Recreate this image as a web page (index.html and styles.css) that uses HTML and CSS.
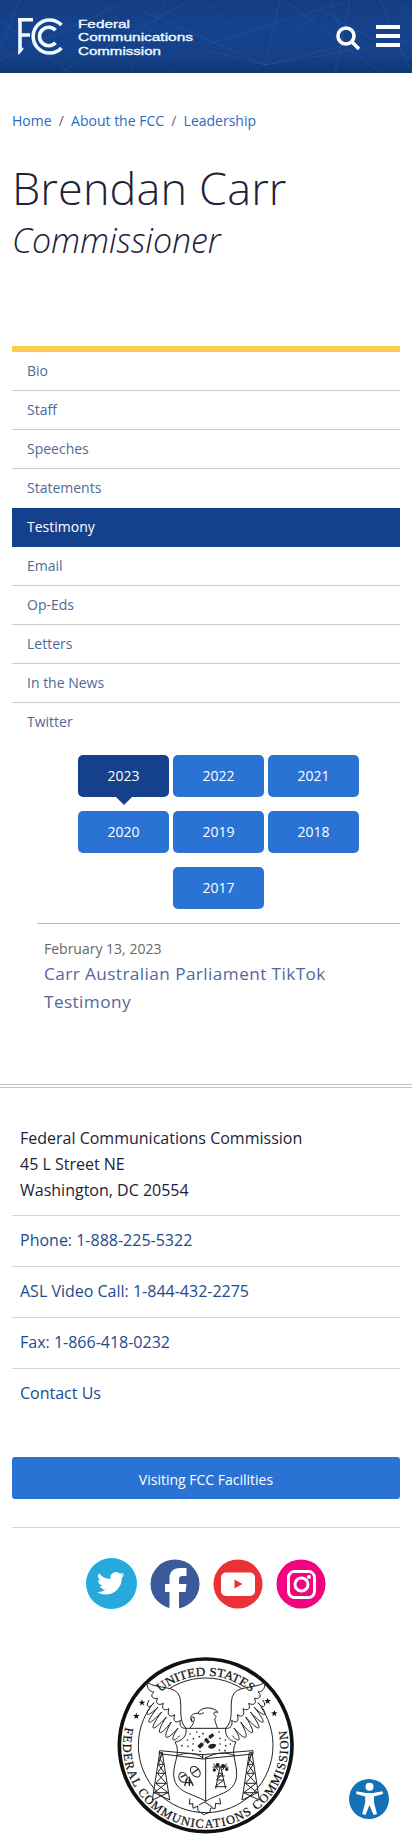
FILE: index.html
```html
<!DOCTYPE html>
<html lang="en">
<head>
<meta charset="utf-8">
<meta name="viewport" content="width=device-width, initial-scale=1">
<title>Brendan Carr | Federal Communications Commission</title>
<link rel="stylesheet" href="styles.css">
</head>
<body>
<header class="site-header">
  <svg class="header-web" viewBox="0 0 412 73" preserveAspectRatio="none" aria-hidden="true">
    <path d="M0 60 130 0M60 73 190 0M100 0 170 73M140 10 265 65 206 0M206 45 350 0M265 65 280 0M265 65 320 10 412 60M265 65 206 50M265 65 345 45 330 0M285 0 380 73M335 73 350 0M265 65 412 40M0 20 70 73M395 0 412 20M20 0 0 50M380 0 412 73M130 73 165 0"/>
  </svg>
  <a class="brand" href="#">
    <svg class="mark" viewBox="0 0 46 38" aria-label="FCC">
      <g class="mark-lines">
        <path d="M0 1.7H15M2 1V34M2 17H12"/>
        <path class="thin" d="M0 36 5 30"/>
        <path d="M43.5 7A16.5 16.5 0 1 0 43.5 30"/>
        <path d="M37.5 12.3A9.2 9.2 0 1 0 37.5 24.7"/>
      </g>
    </svg>
    <svg class="wordmark" viewBox="0 0 118 40">
      <text x="0" y="9.7" textLength="52" lengthAdjust="spacingAndGlyphs">Federal</text>
      <text x="0" y="23.2" textLength="115" lengthAdjust="spacingAndGlyphs">Communications</text>
      <text x="0" y="36.6" textLength="83" lengthAdjust="spacingAndGlyphs">Commission</text>
    </svg>
  </a>
  <div class="tools">
    <svg class="search" viewBox="0 0 25 25"><circle cx="10" cy="10" r="8"/><path d="M15.8 15.8 23 23"/></svg>
    <span class="burger"><i></i><i></i><i></i></span>
  </div>
</header>

<main class="main">
  <nav class="crumbs"><a href="#">Home</a><span>/</span><a href="#">About the FCC</a><span>/</span><a href="#">Leadership</a></nav>
  <h1 class="name">Brendan Carr</h1>
  <p class="role">Commissioner</p>

  <ul class="side-nav">
    <li><a href="#">Bio</a></li>
    <li><a href="#">Staff</a></li>
    <li><a href="#">Speeches</a></li>
    <li><a href="#">Statements</a></li>
    <li class="active"><a href="#">Testimony</a></li>
    <li><a href="#">Email</a></li>
    <li><a href="#">Op-Eds</a></li>
    <li><a href="#">Letters</a></li>
    <li><a href="#">In the News</a></li>
    <li><a href="#">Twitter</a></li>
  </ul>

  <section class="listing">
    <div class="years">
      <a class="year current" href="#">2023</a><a class="year" href="#">2022</a><a class="year" href="#">2021</a>
      <a class="year" href="#">2020</a><a class="year" href="#">2019</a><a class="year" href="#">2018</a>
      <a class="year" href="#">2017</a>
    </div>
    <article class="entry">
      <p class="date">February 13, 2023</p>
      <a class="entry-link" href="#">Carr Australian Parliament TikTok Testimony</a>
    </article>
  </section>
</main>

<footer class="footer">
  <address class="address">Federal Communications Commission<br>45 L Street NE<br>Washington, DC 20554</address>
  <ul class="contacts">
    <li><a href="#">Phone: 1-888-225-5322</a></li>
    <li><a href="#">ASL Video Call: 1-844-432-2275</a></li>
    <li><a href="#">Fax: 1-866-418-0232</a></li>
    <li><a href="#">Contact Us</a></li>
  </ul>
  <a class="visit" href="#">Visiting FCC Facilities</a>
  <div class="social">
    <svg class="tw" viewBox="0 0 51 51"><circle cx="25.500" cy="25.500" r="25.500" fill="#26a9dc"/><path fill="#fff" transform="translate(11 11.500) scale(1.150)" d="M23.950 4.570a10 10 0 0 1-2.820.770 4.960 4.960 0 0 0 2.160-2.720c-.950.550-2 .950-3.130 1.180a4.920 4.920 0 0 0-8.380 4.480C7.690 8.090 4.070 6.130 1.640 3.160a4.820 4.820 0 0 0-.670 2.480c0 1.710.870 3.210 2.190 4.100a4.900 4.900 0 0 1-2.230-.620v.060a4.920 4.920 0 0 0 3.950 4.830 5 5 0 0 1-2.210.080 4.940 4.940 0 0 0 4.600 3.420A9.870 9.870 0 0 1 0 19.540a14 14 0 0 0 7.550 2.210c9.050 0 14-7.500 14-13.980 0-.210 0-.420-.020-.630a9.940 9.940 0 0 0 2.420-2.570z"/></svg>
    <svg class="fb" viewBox="0 0 50 50"><circle cx="25" cy="25" r="24.500" fill="#3a5a9b"/><path fill="#fff" d="M19.500 50V33H15v-8h4.500v-5.500C19.500 12.500 23.500 9 30 9h6.500v8H33c-3 0-4 1-4 3.500V25h7.500l-1 8H29v17z"/></svg>
    <svg class="yt" viewBox="0 0 50 50"><circle cx="25" cy="25" r="24.500" fill="#ea3236"/><rect x="8" y="13.500" width="34" height="23.500" rx="5" fill="#fff"/><path fill="#ea3236" d="M21.500 20.500v9l8-4.500z"/></svg>
    <svg class="ig" viewBox="0 0 50 50"><circle cx="25" cy="25" r="24.500" fill="#f0047f"/><g fill="none" stroke="#fff" stroke-width="3"><rect x="12.500" y="12.500" width="26" height="26" rx="6"/><circle cx="25.500" cy="25.500" r="6.500"/></g><circle cx="33" cy="18" r="2" fill="#fff"/></svg>
  </div>
  <svg class="seal" viewBox="0 0 570 558">
    <defs>
      <path id="arc-top" d="M78 286A209 209 0 0 1 496 286"/>
      <path id="arc-bottom" d="M47.900 222.200A247.500 247.500 0 1 0 526.100 222.200"/>
      <path id="star" d="M0-10 2.600-3 10-2.800 4 1.400 6 9 0 4.300-6 9-4 1.400-10-2.800-2.600-3z"/>
      <g id="tower" fill="none" stroke="#222" stroke-width="3"><path d="M-4 0-26 142M4 0 26 142M-4 0H4L-8 35 11 62-16 92 21 120-26 142M4 0-4 18 8 35-11 62 16 92-21 120 26 142M-8 35H8M-11 62H11M-16 92H16M-21 120H21"/></g>
    </defs>
    <circle cx="287" cy="286" r="259" fill="#fff" stroke="#111" stroke-width="11"/>
    <circle cx="287" cy="286" r="202" fill="none" stroke="#222" stroke-width="3"/>
    <path fill="#fff" stroke="none" d="M112 98C145 118 195 108 208 140L228 235H347L360 140C378 108 430 118 464 98L440 250H130z"/>
    <g class="seal-text">
      <text><textPath href="#arc-top" startOffset="180" textLength="296" lengthAdjust="spacingAndGlyphs">UNITED STATES</textPath></text>
      <text><textPath href="#arc-bottom" startOffset="9" textLength="878">FEDERAL COMMUNICATIONS COMMISSION</textPath></text>
    </g>
    <g fill="#111"><use href="#star" x="96" y="158"/><use href="#star" x="79" y="198"/><use href="#star" x="473" y="153"/><use href="#star" x="493" y="190"/></g>
    <g fill="none" stroke="#222" stroke-width="3" stroke-linejoin="round">
      <path d="M112 98C145 118 198 105 209 140C218 172 203 210 228 235M112 98C110 118 120 125 132 126C118 138 128 148 143 145C134 160 145 168 160 160C153 178 164 184 177 176C170 196 180 204 194 194C188 213 196 222 211 211C207 228 215 236 228 235"/>
      <path d="M118 150C103 170 118 178 132 158C98 196 108 208 144 171C100 225 112 233 155 186C112 244 126 250 169 201C132 258 148 263 184 216C153 270 168 277 204 234C178 272 188 281 209 257"/>
      <path d="M464 98C430 118 378 105 367 140C358 172 373 210 347 235M464 98C466 118 456 125 444 126C458 138 448 148 433 145C442 160 431 168 416 160C423 178 412 184 399 176C406 196 396 204 382 194C388 213 380 222 365 211C369 228 361 236 347 235"/>
      <path d="M458 150C473 170 458 178 444 158C478 196 468 208 432 171C476 225 464 233 421 186C464 244 450 250 407 201C444 258 428 263 392 216C423 270 408 277 372 234C398 272 388 281 367 257"/>
      <path d="M240 234C250 222 254 212 252 201C243 201 243 208 247 216C236 204 244 188 264 190C270 171 309 167 324 187C307 183 309 193 319 200C309 207 319 220 322 234M265 191C272 193 277 192 282 187"/>
      <path fill="#fff" d="M228 235H347C344 257 359 274 378 276C361 305 379 335 380 370C380 430 326 429 287 454C249 429 190 430 191 370C192 335 213 305 195 276C216 274 232 257 228 235z"/>
      <path d="M200 317C230 306 255 308 278 323M288 323C320 306 350 306 374 317M287 320V454"/>
      <path d="M149 302 278 314V327L147 311zM429 302 278 314V327L429 312z"/>
      <path d="M240 445 238 463 248 460 249 475 263 468 264 482 281 494 299 487 303 473 315 476 317 460 332 462 329 445M267 465 284 456 305 470"/>
    </g>
    <use href="#tower" x="153" y="308"/><use href="#tower" x="422" y="308"/>
    <g fill="none" stroke="#222" stroke-width="3">
      <ellipse cx="219" cy="382" rx="12" ry="15" transform="rotate(-25 219 382)"/><ellipse cx="256" cy="365" rx="12" ry="18" transform="rotate(-40 256 365)"/><path d="M212 382 228 374M247 370 266 356M230 385 224 408M236 380 250 408M228 398H248M238 382V408" stroke-width="4"/>
      <path d="M330 350 317 416M332 350 347 416M326 370H338L320 390H342L315 410H350M308 351H355M311 341 324 361M350 341 337 361M320 378H344" stroke-width="3"/>
    </g>
    <g fill="#222"><circle cx="323" cy="345" r="6"/><circle cx="339" cy="348" r="6"/><circle cx="313" cy="360" r="5"/><circle cx="350" cy="358" r="5"/>
      <path d="m262 288 12-11 8 8-12 11zM295 258l12-8 6 7-12 10zM282 269l7-6 11 12-7 7z"/><path d="M294 291c4-11 16-12 25-7-3 12-17 17-25 7z"/></g>
    <path fill="none" stroke="#222" stroke-width="2" d="M270 288 306 256"/>
    <path class="dots" d="M240 252h.1M260 246h.1M279 251h.1M327 246h.1M232 270h.1M250 266h.1M268 260h.1M330 265h.1M346 270h.1M216 287h.1M234 289h.1M249 282h.1M330 282h.1M347 287h.1M361 282h.1M248 301h.1M270 304h.1M328 300h.1M345 302h.1"/>
  </svg>
</footer>
<a class="access" href="#" aria-label="Accessibility">
  <svg viewBox="0 0 40 40"><circle cx="20" cy="20" r="20" fill="#1471b5"/><circle cx="20.500" cy="7.800" r="4" fill="#fff"/><path fill="#fff" d="M7.500 12.300 17 14h7l9.500-1.700.5 2.700-9 2.500v6l3 11.500-3.500 1-4-10-4 10-3.300-1 3-11.500v-6L7.200 15z"/></svg>
</a>
</body>
</html>
```
FILE: styles.css
```css
* { box-sizing: border-box; }
body {
  margin: 0;
  height: 1836px;
  overflow: hidden;
  background: #fff;
  color: #1d2238;
  font-family: "Open Sans", "Noto Sans", sans-serif;
  font-size: 14px;
}
a { text-decoration: none; color: inherit; }
ul { margin: 0; padding: 0; list-style: none; }
svg { display: block; }

.site-header {
  position: relative;
  height: 73px;
  padding: 0 12px 0 18px;
  display: flex;
  justify-content: space-between;
  background: linear-gradient(#143d80, #16428c 35%, #15418a 75%, #10376f);
}
.header-web { position: absolute; inset: 0; width: 100%; height: 100%; }
.header-web path { fill: none; stroke: #6a9be0; stroke-opacity: .13; stroke-width: 1; }
.brand { position: relative; display: flex; gap: 14px; padding-top: 18px; }
.mark { width: 46px; height: 38px; }
.mark-lines { fill: none; stroke: #f2fbff; stroke-width: 3.6; }
.mark-lines .thin { stroke-width: 2; }
.wordmark { width: 118px; height: 40px; overflow: visible; }
.wordmark text { fill: #eef9ff; stroke: #eef9ff; stroke-width: .35px; font: 400 11.5px "Liberation Sans", sans-serif; }
.tools { position: relative; display: flex; gap: 15px; padding-top: 25px; }
.search { width: 25px; height: 25px; margin-top: 1px; }
.search circle, .search path { fill: none; stroke: #fff; stroke-width: 3.6; }
.burger { display: flex; flex-direction: column; gap: 5px; width: 24px; }
.burger i { height: 4px; background: #fff; }

.main { padding: 0 12px; height: 1011px; }
.crumbs { padding-top: 38px; line-height: 20px; color: #666; display: flex; }
.crumbs span { width: 19.5px; text-align: center; }
.crumbs a { color: #2a69c4; }
.name { margin: 27px 0 0; font-weight: 300; font-size: 45px; line-height: 60px; letter-spacing: .15px; }
.role { margin: 2px 0 0; font-weight: 300; font-style: italic; font-size: 34px; line-height: 40px; letter-spacing: -.1px; }

.side-nav { margin-top: 86px; border-top: 6px solid #ffcc4d; }
.side-nav li { height: 39px; padding: 0 15px; line-height: 38px; border-bottom: 1px solid #ccc; color: #50699b; }
.side-nav li:nth-child(4) { border-color: #fff; }
.side-nav li.active { background: #15418c; color: #fff; border-color: #15418c; }
.side-nav li:last-child { border-color: transparent; }

.listing { margin: 13px 0 0 25px; }
.years { display: flex; flex-wrap: wrap; justify-content: center; gap: 14px 4px; padding: 0 40px; }
.year { position: relative; width: 91px; height: 42px; border-radius: 5px; background: #2a72d4; color: #fff; text-align: center; line-height: 42px; }
.year.current { background: #15418c; }
.year.current::after { content: ""; position: absolute; left: 38px; top: 42px; border: 8px solid transparent; border-top-color: #15418c; border-bottom: 0; }
.entry { margin-top: 14px; padding: 14px 7px 0; border-top: 1px solid #bbb; }
.date { margin: 0; line-height: 22px; color: #666; }
.entry-link { display: block; font-size: 17.2px; line-height: 28px; letter-spacing: .42px; color: #50699b; }

.footer { position: relative; border-top: 4px double #c4c4c4; padding: 37px 12px 0; font-size: 16px; }
.address { padding: 0 8px 12px; font-style: normal; line-height: 26px; }
.contacts li { height: 51px; padding: 11px 8px 0; border-top: 1px solid #d6d6d6; line-height: 26px; color: #1d4a8c; }
.visit { display: block; height: 42px; margin-top: 38px; border-radius: 3px; background: #2a72d4; color: #fff; text-align: center; font-size: 14px; line-height: 45px; }
.social { display: flex; justify-content: center; align-items: center; gap: 13px; margin-top: 28px; padding: 30px 1px 0 0; border-top: 1px solid #d6d6d6; }
.social svg { width: 50px; height: 50px; }
.social .tw { width: 51px; height: 51px; }
.seal { width: 190px; height: 186px; margin: 41px 0 0 98px; }
.seal-text { font-family: "Liberation Serif", serif; font-size: 37px; fill: #111; stroke: #111; stroke-width: .7; }
.dots { fill: none; stroke: #222; stroke-width: 5; stroke-linecap: round; }
.access { position: fixed; right: 23px; bottom: 17px; width: 40px; height: 40px; }
```
